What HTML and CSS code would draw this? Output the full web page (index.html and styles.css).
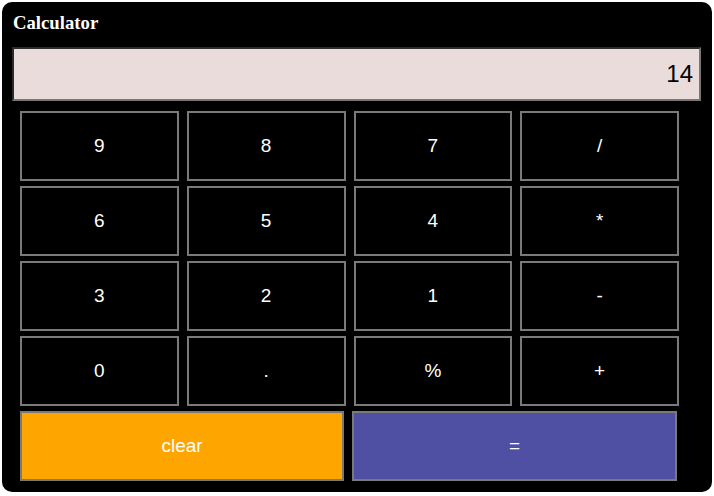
FILE: index.html
```html
<!DOCTYPE html>
<html>
<head>
<meta charset="utf-8">
<link rel="stylesheet" href="styles.css">
</head>
<body>
<div class="calc">
  <h3 class="title">Calculator</h3>
  <input class="display" type="text" value="14" readonly>
  <div class="keys">
    <button class="key">9</button>
    <button class="key">8</button>
    <button class="key">7</button>
    <button class="key">/</button>
    <button class="key">6</button>
    <button class="key">5</button>
    <button class="key">4</button>
    <button class="key">*</button>
    <button class="key">3</button>
    <button class="key">2</button>
    <button class="key">1</button>
    <button class="key">-</button>
    <button class="key">0</button>
    <button class="key">.</button>
    <button class="key">%</button>
    <button class="key">+</button>
  </div>
  <div class="actions">
    <button class="key clear">clear</button>
    <button class="key equals">=</button>
  </div>
</div>
</body>
</html>
```
FILE: styles.css
```css
html, body {
  margin: 0;
  padding: 0;
  background: #ffffff;
}

body {
  font-family: "Liberation Sans", Arial, sans-serif;
}

.calc {
  margin: 2px;
  width: 710px;
  height: 490px;
  box-sizing: border-box;
  padding: 10px;
  background: #000000;
  border-radius: 10px;
  display: flex;
  flex-direction: column;
}

.title {
  margin: 0;
  padding-left: 1px;
  font-family: "Liberation Serif", "Times New Roman", serif;
  font-weight: bold;
  font-size: 18.72px;
  line-height: 22px;
  color: #ffffff;
}

.display {
  margin: 13px 0 0 0;
  width: 689px;
  height: 54px;
  box-sizing: border-box;
  border-width: 2px;
  border-style: solid;
  border-color: #2b2b2b #767676 #767676 #2b2b2b;
  background: #ebdcdc;
  color: #000000;
  font-family: "Liberation Sans", Arial, sans-serif;
  font-size: 24px;
  text-align: right;
  padding: 0 6px 0 4px;
  outline: none;
}

.keys {
  margin: 10px 0 0 8px;
  display: grid;
  grid-template-columns: repeat(4, 158.75px);
  grid-auto-rows: 70px;
  column-gap: 8px;
  row-gap: 5px;
}

.actions {
  margin: 5px 0 0 8px;
  display: grid;
  grid-template-columns: 324px 325px;
  grid-auto-rows: 70px;
  column-gap: 8px;
}

.key {
  margin: 0;
  padding: 0;
  box-sizing: border-box;
  border: 2px solid #7a7a7a;
  background: #000000;
  color: #ffffff;
  font-family: "Liberation Sans", Arial, sans-serif;
  font-size: 19px;
}

.clear {
  background: #ffa500;
}

.equals {
  background: #4f4fa3;
}
```
